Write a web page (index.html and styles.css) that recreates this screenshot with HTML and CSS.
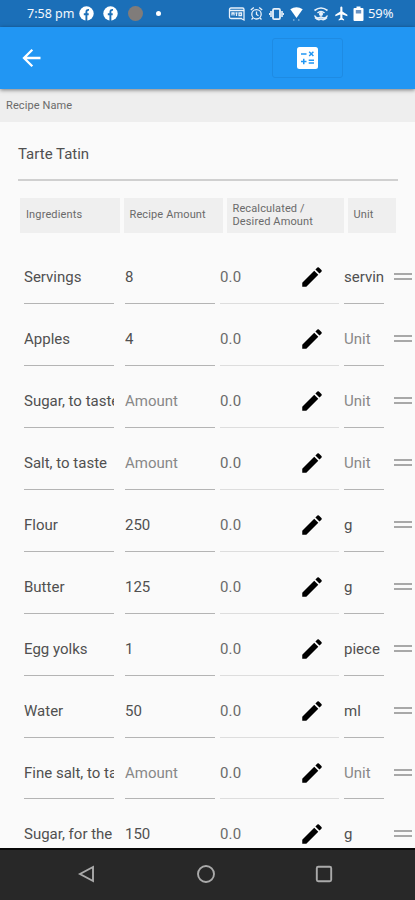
FILE: index.html
```html
<!DOCTYPE html>
<html lang="en">
<head>
<meta charset="utf-8">
<title>Recipe</title>
<link rel="stylesheet" href="styles.css">
</head>
<body>
<svg class="defs" aria-hidden="true">
  <symbol id="pencil" viewBox="0 0 24 24"><path d="M3 17.25V21h3.75L17.81 9.94l-3.75-3.75L3 17.25zM20.71 7.04a1 1 0 0 0 0-1.41l-2.34-2.34a1 1 0 0 0-1.41 0l-1.83 1.83 3.75 3.75 1.83-1.83z"/></symbol>
  <symbol id="fb" viewBox="0 0 15 15"><circle cx="7.500" cy="7.500" r="7.200" fill="#fff"/><path d="M7.400 15V6q0-2.300 2.600-2.100M4.800 8.300h4.900" fill="none" stroke="#1b6fb8" stroke-width="1.900"/></symbol>
</svg>
<div class="screen">
  <header class="status">
    <span class="time">7:58 pm</span>
    <svg class="fb1" width="15" height="15"><use href="#fb"/></svg>
    <svg class="fb2" width="15" height="15"><use href="#fb"/></svg>
    <span class="blob"></span>
    <span class="dot"></span>
    <svg class="tray" width="136" height="18" viewBox="228 4 136 18" fill="none" stroke="#e8f1fa" stroke-width="1.300">
      <path d="M242 17.500H231q-1.500 0-1.500-1.500V8.500Q229.500 7 231 7h11.500Q244 7 244 8.500V19l-3-1.500M230 9.500h14M232 14.500v-2.500h2v2.500M235.500 12h2M236.500 12v3M239 12v2.500h2.500V12z"/>
      <circle cx="256.500" cy="13.300" r="4.700"/><path d="M256.500 10.500v3l2 1.300M250.800 9l3-2.500M262.200 9l-3-2.500M253 17l-1.500 1.500M260 17l1.500 1.500"/>
      <rect x="273" y="7.800" width="7" height="10.400" rx="1.200" stroke-width="1.800"/><path d="M271 10v6M282 10v6" stroke-width="1.600"/><path d="M269.700 12v2M283.300 12v2"/>
      <path d="M290.300 8.300q6.200-4.200 12.400 0L296.500 17z" fill="#fff" stroke="none"/><path d="M293 19h1.500M298 19h1.500" opacity=".5"/>
      <path d="M314.500 9.500q6.500-5 13 0M317.500 12q3.500-3 7 0" stroke-width="1.600"/><circle cx="321" cy="13" r="1.400" fill="#e8f1fa"/><path d="M314.500 14.500q2 4 6.500 1.300 4.500 2.700 6.500-1.300M315 16.500q3 3.500 6 1.300 3 2.200 6-1.300" stroke-width="1.500"/>
      <path d="M340.300 6.500c.2-1.500 1.900-1.500 2.100 0v4l5 3.200v1.500l-5-1.600v3.500l1.700 1.400v1l-2.750-.8-2.750.8v-1l1.700-1.400v-3.500l-5 1.600v-1.500l5-3.200z" fill="#fff" stroke="none"/>
      <path d="M356.500 5.500h4V7h2q1 0 1 1v11q0 1-1 1h-8q-1 0-1-1V8q0-1 1-1h2z" fill="#fff" stroke="none"/><rect x="355.800" y="9" width="5.400" height="3.500" fill="#6a94c4" stroke="none"/>
    </svg>
    <span class="pct">59%</span>
  </header>
  <nav class="appbar">
    <svg class="back" width="24" height="24" viewBox="0 0 24 24" fill="none" stroke="#fff" stroke-width="2.300"><path d="M21.500 12H5M13.300 3.700L5 12l8.300 8.300"/></svg>
    <div class="calc"><svg width="21" height="22" viewBox="0 0 21 22"><rect width="21" height="22" rx="2.500" fill="#fff"/><path d="M4 7h5.500M4 14.500h5.500M6.750 11.800v5.400M12.200 4.800l4.200 4.200M16.400 4.800l-4.200 4.200M11.700 13.200h5.300M11.700 16h5.300" fill="none" stroke="#2196f3" stroke-width="1.500"/></svg></div>
  </nav>
  <div class="label">Recipe Name</div>
  <main>
    <div class="name">Tarte Tatin</div>
    <div class="heads"><span>Ingredients</span><span>Recipe Amount</span><span>Recalculated /<br>Desired Amount</span><span>Unit</span></div>
    <div class="rows">
      <div class="row"><span>Servings</span><span>8</span><span class="calcd">0.0<svg><use href="#pencil"/></svg></span><span>servin</span><i></i></div>
      <div class="row"><span>Apples</span><span>4</span><span class="calcd">0.0<svg><use href="#pencil"/></svg></span><span class="hint">Unit</span><i></i></div>
      <div class="row"><span>Sugar, to taste</span><span class="hint">Amount</span><span class="calcd">0.0<svg><use href="#pencil"/></svg></span><span class="hint">Unit</span><i></i></div>
      <div class="row"><span>Salt, to taste</span><span class="hint">Amount</span><span class="calcd">0.0<svg><use href="#pencil"/></svg></span><span class="hint">Unit</span><i></i></div>
      <div class="row"><span>Flour</span><span>250</span><span class="calcd">0.0<svg><use href="#pencil"/></svg></span><span>g</span><i></i></div>
      <div class="row"><span>Butter</span><span>125</span><span class="calcd">0.0<svg><use href="#pencil"/></svg></span><span>g</span><i></i></div>
      <div class="row"><span>Egg yolks</span><span>1</span><span class="calcd">0.0<svg><use href="#pencil"/></svg></span><span>piece</span><i></i></div>
      <div class="row"><span>Water</span><span>50</span><span class="calcd">0.0<svg><use href="#pencil"/></svg></span><span>ml</span><i></i></div>
      <div class="row"><span>Fine salt, to ta</span><span class="hint">Amount</span><span class="calcd">0.0<svg><use href="#pencil"/></svg></span><span class="hint">Unit</span><i></i></div>
      <div class="row"><span>Sugar, for the</span><span>150</span><span class="calcd">0.0<svg><use href="#pencil"/></svg></span><span>g</span><i></i></div>
    </div>
  </main>
  <footer class="navbar">
    <svg width="20" height="20" viewBox="0 0 20 20"><path d="M16 3v14L3 10z"/></svg>
    <svg width="20" height="20" viewBox="0 0 20 20"><circle cx="10" cy="10" r="8"/></svg>
    <svg width="20" height="20" viewBox="0 0 20 20"><rect x="2.800" y="2.800" width="14.400" height="14.400" rx="1.500"/></svg>
  </footer>
</div>
</body>
</html>
```
FILE: styles.css
```css
* { box-sizing: border-box; }
body { margin: 0; font-family: Roboto, sans-serif; color: #505050; }
.defs { display: none; }
.screen { width: 415px; height: 900px; display: flex; flex-direction: column; overflow: hidden; background: #fafafa; }
.status { height: 27px; flex: none; background: #1b6fb8; color: #f4f8fc; display: flex; align-items: center; padding-left: 27px; font: 12.5px/26px "Noto Sans", sans-serif; }
.status > * { flex: none; }
.time { width: 52px; white-space: nowrap; }
.fb2 { margin-left: 9px; }
.blob { width: 15px; height: 15px; border-radius: 50%; background: #807c7a; margin-left: 10px; }
.dot { width: 5px; height: 5px; border-radius: 50%; background: #fff; margin-left: 13px; }
.tray { margin-left: 67px; }
.pct { margin: -2px 0 0 4px; font-size: 13px; letter-spacing: -.1px; }
.appbar { height: 61.500px; flex: none; background: #2196f3; display: flex; align-items: center; padding-left: 19px; box-shadow: 0 1px 4px rgba(0,0,0,.5); position: relative; }
.calc { width: 71px; height: 40px; margin-left: 229px; border: 1.500px solid #1e8be3; border-radius: 3px; display: flex; align-items: center; justify-content: center; }
.label { height: 33.500px; flex: none; background: #eee; padding-left: 6px; font-size: 11px; line-height: 33px; letter-spacing: .1px; color: #6a6a6a; }
main { flex: 1; min-height: 0; overflow: hidden; }
.name { margin: 0 17px 0 18px; height: 59px; border-bottom: 2px solid #d0d0d0; font-size: 15px; line-height: 64px; }
.heads { margin: 17px 0 0 20px; height: 35px; display: grid; grid-template-columns: 100px 99px 117px 48px; gap: 4px; }
.heads span { background: #efefef; padding-left: 6px; display: flex; align-items: center; font-size: 11px; line-height: 13px; padding-bottom: 2px; letter-spacing: .13px; color: #6a6a6a; white-space: nowrap; }
.heads span:nth-child(n+2) { padding-left: 5.500px; }
.rows { margin: 9.400px 0 0 24px; }
.row { height: 61.900px; display: grid; grid-template-columns: 90px 90px 119px 40px 18px; column-gap: 5px; }
.row > span { border-bottom: 1px solid #b4b4b4; overflow: hidden; white-space: nowrap; font-size: 15px; line-height: 71.500px; }
.row > span:nth-child(n+2) { margin-left: 6px; margin-right: -6px; }
.row > .calcd { border-color: #ddd; display: flex; align-items: flex-start; justify-content: space-between; padding-right: 14px; color: #6a6a6a; letter-spacing: .15px; }
.calcd svg { width: 26px; height: 26px; margin-top: 22px; fill: #000; }
.row > .hint { color: #888; }
.row > i { height: 7px; margin: 31px -11px 0 11px; border: solid #a8a8a8; border-width: 2px 0; }
.navbar { height: 52.500px; flex: none; background: #282828; border-top: 2px solid #080808; display: flex; justify-content: space-between; align-items: center; padding: 0 81px 2px 77px; }
.navbar svg { fill: none; stroke: #aaa; stroke-width: 1.900; }
```
